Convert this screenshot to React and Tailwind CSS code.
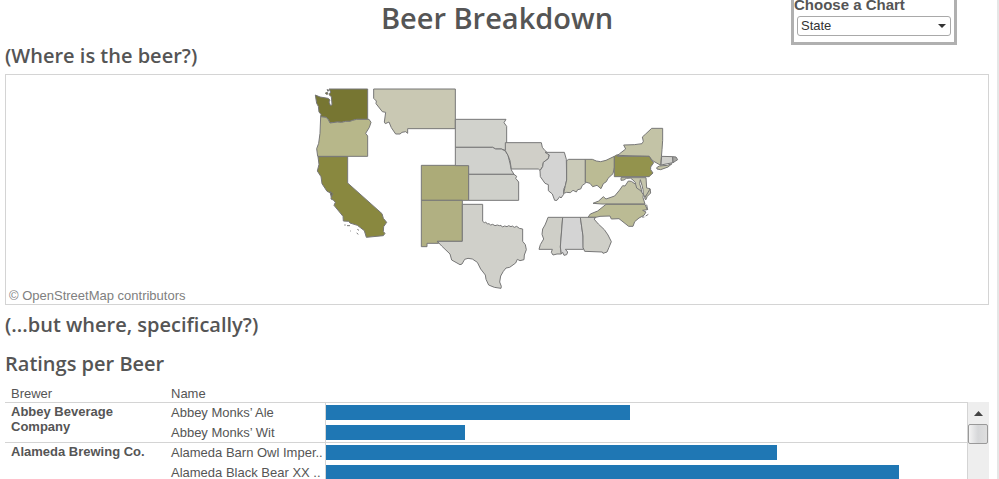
const REGIONS = [
  {
    origin: 'translate(900 240)',
    states: [
      { name: 'Washington', fill: '#777632', d: 'M46 45L60 51L84 55L90 60L87 66L92 78L96 73L94 50L87 44L92 36L87 27H203V118L170 118L158 121L150 124L137 124L125 127L112 126L90 129L84 117L78 112L62 110L63 103L57 96L55 79L50 70Z' },
      { name: 'Oregon', fill: '#b7b78a', d: 'M62 110L78 112L84 117L90 129L112 126L125 127L137 124L150 124L158 121L170 118H207L213 127L208 142L197 160L203 168V229H53L50 206L56 190L60 160Z' },
      { name: 'Montana', fill: '#c9c8b3', d: 'M221 27H466V146H323V160L317 155L306 157L300 162L287 162L274 143L267 126L256 131L253 126L257 97L247 95L228 71L229 63L221 55Z' },
      { name: 'Puget Sound islands', fill: '#777632', d: 'M76 39L82 37L84 42L79 43ZM81 29L86 30L84 34Z' },
    ],
  },
  {
    origin: 'translate(900 450)',
    states: [
      { name: 'California', fill: '#89883f', d: 'M54 20H143V99L246 191L250 205L260 217L251 230L250 245L255 250L250 257L199 262L193 242L180 232L172 226L150 219L146 214L130 213L129 199L102 166L106 157L100 150L93 147L94 138L90 128L81 124L66 101L63 80L52 63L57 43Z' },
      { name: 'San Francisco Bay', fill: '#6c6b3c', d: 'M91 125L98 131L94 141Z' },
      { name: 'Channel Islands', fill: '#777', d: 'M133 225H137M141 227H150M151 243H153M172 238L177 241M170 249L175 253' },
      { name: 'Colorado', fill: '#acab78', d: 'M364 46H506V151H364Z' },
      { name: 'New Mexico', fill: '#b1b082', d: 'M364 151H487V274H412L416 280H381V290H364Z' },
    ],
  },
  {
    origin: 'translate(1200 330)',
    states: [
      { name: 'South Dakota', fill: '#d1d2cc', d: 'M166 28H318L312 38L320 49V97L316 121L304 117L287 117L278 112H166Z' },
      { name: 'Nebraska', fill: '#d1d2ce', d: 'M166 112H278L287 117L304 117L316 123L324 136L330 160L334 180L342 193H206V167H166Z' },
      { name: 'Kansas', fill: '#cfd0ca', d: 'M206 193H342L350 199L347 205L356 216V271H206Z' },
    ],
  },
  {
    origin: 'translate(1200 570)',
    states: [
      { name: 'Texas', fill: '#d0d0ca', d: 'M187 43H248V94L253 98L257 96L262 102L267 101L272 105L278 103L285 107L292 105L298 107L303 106L307 111L314 108L321 110L326 107L333 110L337 108L343 112L350 109L358 115L368 117V154L376 164L379 179L373 195L372 209L360 212L352 208L347 219L329 232L318 234L310 244L302 258L299 276L304 289L303 295L283 292L266 285L258 268L256 255L242 237L232 217L217 207L204 205L194 208L186 222L180 224L155 210L150 192L125 168L112 154H187Z' },
    ],
  },
  {
    origin: 'translate(1500 360)',
    states: [
      { name: 'Iowa', fill: '#d0cfc8', d: 'M16 68H124L127 82L135 92L148 103L145 116L130 127L128 140L120 151L115 147H34L30 122L24 106L16 92Z' },
      { name: 'Illinois', fill: '#d4d4d3', d: 'M135 97H193L199 118L200 180L196 197L191 208L191 223L183 234L179 230L171 241L164 241L157 222L145 212L145 194L135 190L121 170L120 152L128 140L130 127L145 116L148 105Z' },
      { name: 'Indiana', fill: '#cacab8', d: 'M200 122L206 118H256V190L247 196L242 207L233 209L229 216L219 211L211 218L200 217L191 220L196 197L200 180Z' },
    ],
  },
  {
    origin: 'translate(1740 345)',
    states: [
      { name: 'Ohio', fill: '#bbbb94', d: 'M16 133H37L49 138L62 140L78 136L103 124V157L99 176L84 190L79 200L70 206L63 221L51 211L38 215L30 205L16 201Z' },
      { name: 'New York', fill: '#c3c3a6', d: 'M112 121L119 116L137 102L131 90L163 89L186 86L190 79L187 66L197 57L215 40H248V76L246 104L242 151L218 137L207 124Z' },
      { name: 'Long Island', fill: '#c3c3a6', d: 'M230 158L238 153L262 151L276 146L264 156L242 164L231 162Z' },
      { name: 'Connecticut', fill: '#d0d0cc', d: 'M245 124L278 125L279 143L243 150Z' },
      { name: 'Rhode Island', fill: '#a5a5a2', d: 'M278 125L288 126L293 134L287 138L279 143Z' },
      { name: 'Pennsylvania', fill: '#93934d', d: 'M103 124L112 119V124H208L214 135L221 143L212 156V164L219 174L207 185H103Z' },
    ],
  },
  {
    origin: 'translate(1560 495)',
    states: [
      { name: 'Maryland', fill: '#c6c6ad', d: 'M303 38H378L380 69L390 71L389 82L379 90L376 99L370 87L369 74L366 61L361 44L359 56L363 69L365 81L357 78L350 73L345 65L347 54L339 45L331 39L319 40L312 45L303 46Z' },
      { name: 'Virginia', fill: '#c3c3a6', d: 'M219 115L236 108L250 95L258 102L284 93L299 75L308 62L315 63L325 48L334 49L347 58L350 69L362 77L370 89L369 98L375 117H246Z' },
      { name: 'Eastern Shore', fill: '#c3c3a6', d: 'M390 72L392 84L382 94L377 105L374 99Z' },
      { name: 'North Carolina', fill: '#bbbb94', d: 'M258 118H375L382 134L368 136L378 141L372 151L357 159L344 170L339 184L326 184L297 161L274 162L270 153L240 154L227 157H204L211 147L233 138Z' },
      { name: 'Outer Banks', fill: '#888', d: 'M380 119L383 135M366 156L373 156M377 153L385 148' },
      { name: 'Mississippi', fill: '#cfcfc8', d: 'M84 157H128L121 246L124 267L111 267L99 270L94 262L97 253H57L61 239L71 222L66 208L68 192L75 180L80 168Z' },
      { name: 'Alabama', fill: '#d4d4d4', d: 'M128 157H181L189 213L190 253H136L143 261L140 269L132 271L128 262L124 267L121 246Z' },
      { name: 'Georgia', fill: '#cfcfc8', d: 'M181 157H228L222 162L235 177L253 194L264 210L274 230L267 247L261 261L249 265L247 261L194 259L189 247V213Z' },
    ],
  },
];

const BREWERS = [
  {
    name: 'Abbey Beverage Company',
    beers: [
      { name: 'Abbey Monks’ Ale', value: 47.5 },
      { name: 'Abbey Monks’ Wit', value: 21.7 },
    ],
  },
  {
    name: 'Alameda Brewing Co.',
    beers: [
      { name: 'Alameda Barn Owl Imper..', value: 70.4 },
      { name: 'Alameda Black Bear XX ..', value: 89.4 },
    ],
  },
];

const HEADING = "font-['Trebuchet_MS','Open_Sans',sans-serif] font-semibold text-[#555]";

function ChartPicker() {
  return (
    <div className="-mt-2 mr-8 w-[166px] justify-self-end border-3 border-[#b0b0b0] pb-1.5">
      <label htmlFor="chart" className="block pb-0.5 text-[15px] leading-[19px] font-bold text-[#555]">
        Choose a Chart
      </label>
      <div className="relative mx-[3px]">
        <select
          id="chart"
          defaultValue="State"
          className="block h-5 w-full appearance-none rounded-[3px] border border-[#a9a9a9] bg-white px-[3px] text-[13px] leading-4 text-[#333]"
        >
          <option>State</option>
        </select>
        <svg className="pointer-events-none absolute top-2 right-[5px] h-1 w-2" viewBox="0 0 8 4" fill="#333">
          <path d="M0 0H8L4 4Z" />
        </svg>
      </div>
    </div>
  );
}

function StateMap() {
  return (
    <section className="relative flex h-[231px] shrink-0 justify-center border border-[#d4d4d4] pt-[11px]">
      <svg className="h-[206px] w-[366px]" viewBox="942 258 1098 618" role="img" aria-label="Beers by state">
        {REGIONS.map((region) => (
          <g key={region.origin} transform={region.origin} stroke="#777" strokeWidth="3" strokeLinejoin="round">
            {region.states.map((s) => (
              <path key={s.name} d={s.d} fill={s.fill} />
            ))}
          </g>
        ))}
      </svg>
      <p className="absolute bottom-0 left-[3px] text-[13px] leading-4 text-[#808080]">
        © OpenStreetMap contributors
      </p>
    </section>
  );
}

function RatingsTable() {
  return (
    <table className="w-full table-fixed border-collapse text-left text-[13px] text-[#555]">
      <thead>
        <tr className="h-4 leading-4">
          <th className="w-40 p-0 pl-1.5 font-normal">Brewer</th>
          <th className="w-40 p-0 pl-1.5 font-normal">Name</th>
          <th className="p-0" aria-label="Rating" />
        </tr>
      </thead>
      {BREWERS.map((brewer) => (
        <tbody key={brewer.name} className="border-t border-[#d4d4d4]">
          {brewer.beers.map((beer, i) => (
            <tr key={beer.name} className="h-5">
              {i === 0 && (
                <th rowSpan={brewer.beers.length} scope="rowgroup" className="p-0 pr-4 pl-1.5 align-top leading-[15px] font-bold whitespace-normal">
                  <span className="block pt-px">{brewer.name}</span>
                </th>
              )}
              <td className="p-0 pt-px pl-1.5 leading-4 whitespace-nowrap">{beer.name}</td>
              <td className="border-x border-[#d4d4d4] p-0">
                <div className="h-[15px] bg-[#1f77b4]" style={{ width: `${beer.value}%` }} />
              </td>
            </tr>
          ))}
        </tbody>
      ))}
    </table>
  );
}

function Scrollbar() {
  return (
    <div className="mt-4 flex w-[21px] shrink-0 flex-col bg-[#eee]">
      <button aria-label="Scroll up" className="flex h-[22px] items-center justify-center">
        <svg className="h-[5px] w-[9px]" viewBox="0 0 9 5" fill="#444">
          <path d="M4.500 0L9 5H0Z" />
        </svg>
      </button>
      <div className="h-5 w-5 rounded-[2px] border border-[#999] bg-linear-to-r from-[#f3f3f3] via-[#d6d7d9] to-[#dedede]" />
    </div>
  );
}

export default function App() {
  return (
    <div className="flex h-screen flex-col overflow-hidden border-r-2 border-[#e6e6e6] bg-white pr-2 pl-[5px] font-['Liberation_Sans',Arial,sans-serif]">
      <header className="grid h-11 shrink-0 grid-cols-[1fr_auto_1fr] items-start">
        <span />
        <h1 className={`${HEADING} text-[29px] leading-9`}>Beer Breakdown</h1>
        <ChartPicker />
      </header>
      <h2 className={`${HEADING} h-[30px] shrink-0 text-[20px] leading-6`}>(Where is the beer?)</h2>
      <StateMap />
      <h2 className={`${HEADING} mt-2 shrink-0 text-[20px] leading-6`}>(...but where, specifically?)</h2>
      <h2 className={`${HEADING} mt-[15px] shrink-0 text-[20px] leading-6`}>Ratings per Beer</h2>
      <div className="mt-[10px] flex min-h-0 flex-1 overflow-hidden">
        <RatingsTable />
        <Scrollbar />
      </div>
    </div>
  );
}
